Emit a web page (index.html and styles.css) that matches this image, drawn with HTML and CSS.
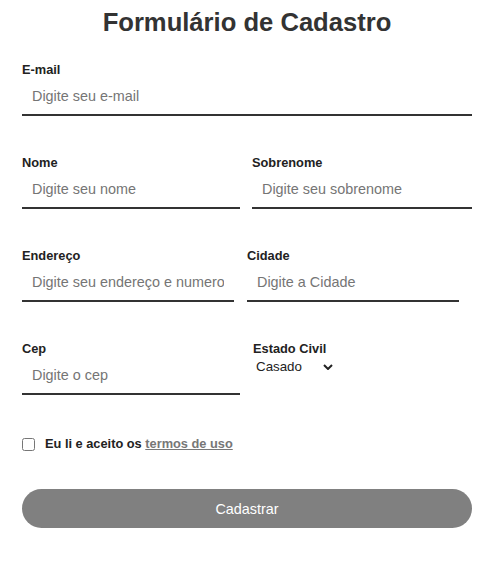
FILE: index.html
```html
<!DOCTYPE html>
<html lang="pt-BR">
<head>
<meta charset="utf-8">
<title>Formulário de Cadastro</title>
<link rel="stylesheet" href="styles.css">
</head>
<body>
<main class="page">
  <h1 class="title">Formulário de Cadastro</h1>
  <form class="form">
    <div class="row row-single">
      <div class="field">
        <label class="label" for="email">E-mail</label>
        <input class="input" id="email" type="text" placeholder="Digite seu e-mail">
      </div>
    </div>
    <div class="row row-name">
      <div class="field">
        <label class="label" for="nome">Nome</label>
        <input class="input" id="nome" type="text" placeholder="Digite seu nome">
      </div>
      <div class="field">
        <label class="label" for="sobrenome">Sobrenome</label>
        <input class="input" id="sobrenome" type="text" placeholder="Digite seu sobrenome">
      </div>
    </div>
    <div class="row row-address">
      <div class="field">
        <label class="label" for="endereco">Endereço</label>
        <input class="input" id="endereco" type="text" placeholder="Digite seu endereço e numero">
      </div>
      <div class="field">
        <label class="label" for="cidade">Cidade</label>
        <input class="input" id="cidade" type="text" placeholder="Digite a Cidade">
      </div>
    </div>
    <div class="row row-cep">
      <div class="field">
        <label class="label" for="cep">Cep</label>
        <input class="input" id="cep" type="text" placeholder="Digite o cep">
      </div>
      <div class="field field-select">
        <label class="label" for="estado">Estado Civil</label>
        <div class="select-wrap">
          <select class="select" id="estado">
            <option>Casado</option>
            <option>Solteiro</option>
            <option>Divorciado</option>
            <option>Viúvo</option>
          </select>
          <svg class="chevron" width="10" height="6" viewBox="0 0 10 6" aria-hidden="true">
            <path d="M1 1 L5 5 L9 1" fill="none" stroke="#222" stroke-width="2"/>
          </svg>
        </div>
      </div>
    </div>
    <div class="terms">
      <input class="check" id="termos" type="checkbox">
      <label class="terms-text" for="termos">Eu li e aceito os <a class="terms-link" href="#">termos de uso</a></label>
    </div>
    <button class="submit" type="button">Cadastrar</button>
  </form>
</main>
</body>
</html>
```

FILE: styles.css
```css
* {
  box-sizing: border-box;
}

body {
  margin: 0;
  background: #ffffff;
  font-family: "Liberation Sans", Arial, sans-serif;
  color: #222;
}

.page {
  width: 450px;
  margin-left: 22px;
  padding-top: 8px;
}

.title {
  margin: 0 0 25px;
  font-size: 25.6px;
  font-weight: bold;
  line-height: 29px;
  text-align: center;
  color: #333;
}

.form {
  display: flex;
  flex-direction: column;
}

.row {
  display: grid;
  margin-bottom: 39px;
}

.row-single {
  grid-template-columns: 450px;
}

.row-name {
  grid-template-columns: 218px 220px;
  column-gap: 12px;
}

.row-address {
  grid-template-columns: 212px 212px;
  column-gap: 13px;
}

.row-cep {
  grid-template-columns: 218px 1fr;
  column-gap: 13px;
}

.field {
  display: flex;
  flex-direction: column;
}

.label {
  font-size: 12.8px;
  font-weight: bold;
  line-height: 16px;
  color: #222;
}

.input {
  height: 38px;
  padding: 10px;
  border: none;
  border-bottom: 2px solid #333;
  outline: none;
  background: transparent;
  font-family: "Liberation Sans", Arial, sans-serif;
  font-size: 14.4px;
  line-height: 16px;
  color: #222;
}

.input::placeholder {
  color: #757575;
}

.select-wrap {
  display: flex;
  align-items: center;
  width: 82px;
  height: 16px;
  margin-top: 2px;
  padding-left: 3px;
}

.select {
  appearance: none;
  -webkit-appearance: none;
  border: none;
  background: transparent;
  padding: 0;
  margin: 0;
  width: 67px;
  font-family: "Liberation Sans", Arial, sans-serif;
  font-size: 13.33px;
  line-height: 16px;
  color: #222;
  outline: none;
}

.chevron {
  display: block;
}

.terms {
  display: flex;
  align-items: center;
  gap: 10px;
  margin-top: 2px;
  margin-bottom: 37px;
}

.check {
  width: 13px;
  height: 13px;
  margin: 0;
}

.terms-text {
  font-size: 12.8px;
  font-weight: bold;
  line-height: 16px;
  color: #222;
}

.terms-link {
  color: #777;
  text-decoration: underline;
}

.submit {
  width: 450px;
  height: 39px;
  border: none;
  border-radius: 20px;
  background: #808080;
  color: #ffffff;
  font-family: "Liberation Sans", Arial, sans-serif;
  font-size: 14.4px;
}
```
